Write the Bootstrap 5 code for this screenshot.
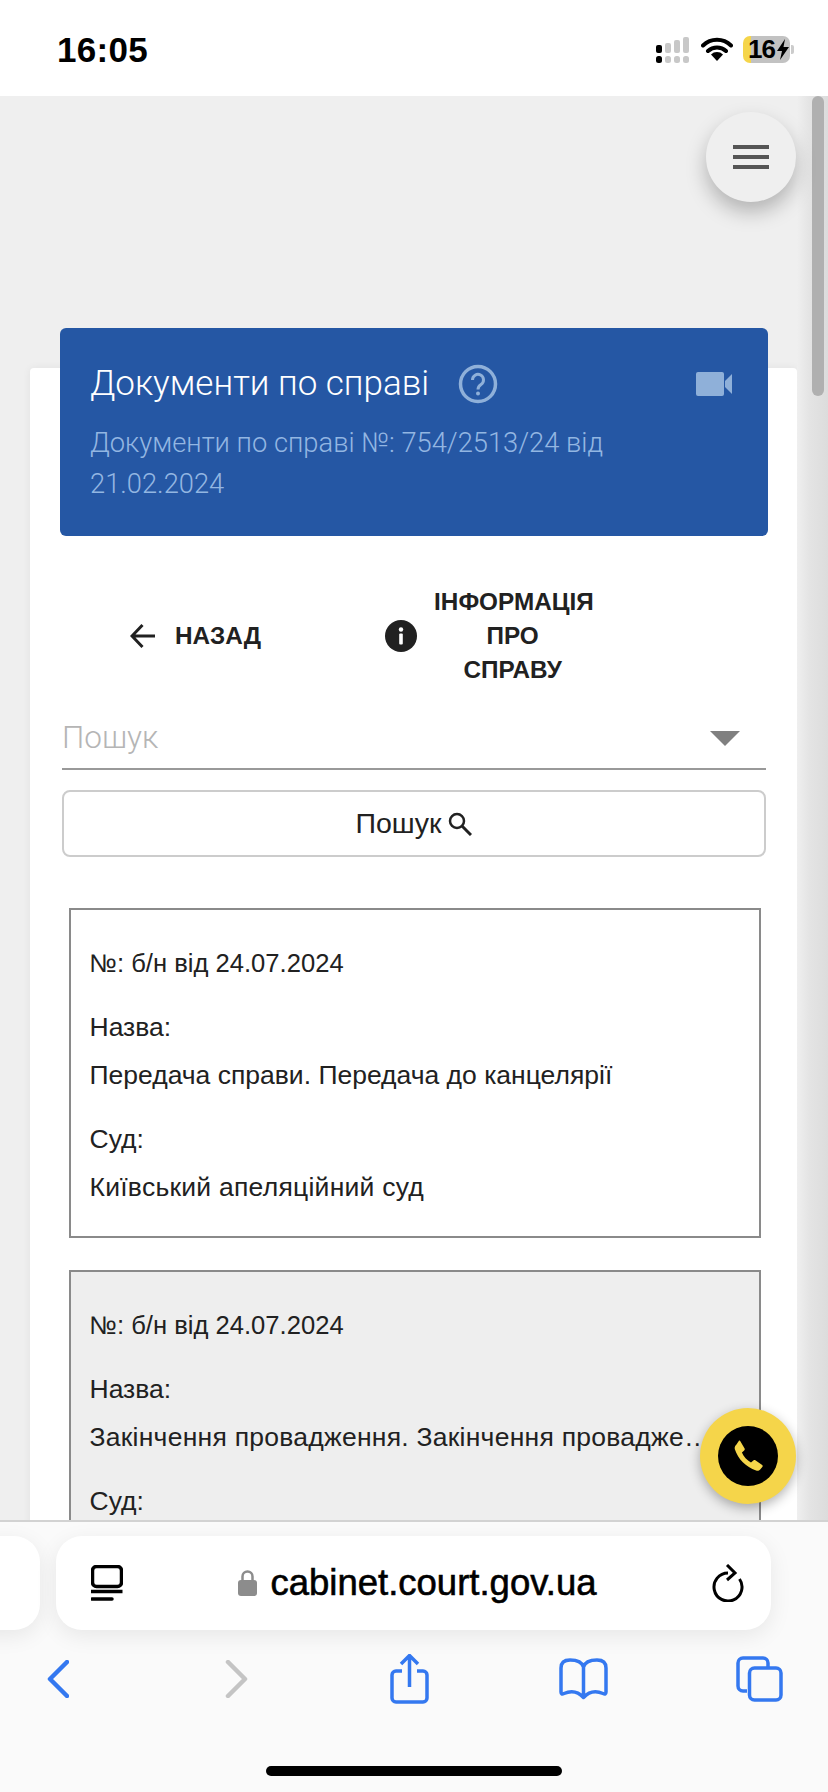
<!DOCTYPE html>
<html lang="uk">
<head>
    <meta charset="UTF-8">
    <meta name="viewport" content="width=device-width, initial-scale=1.0">
    <title>Документи по справі</title>
    <link href="https://cdn.jsdelivr.net/npm/bootstrap@5.3.0/dist/css/bootstrap.min.css" rel="stylesheet">
    <style>
        html, body { height: 1792px; overflow: hidden; }
        body { font-family: "Liberation Sans", Arial, sans-serif; background: #fafafa; color: #212121; }
        .status-bar { height: 96px; background: #fff; padding: 0 34px 0 57px; }
        .status-time { font-size: 35px; font-weight: 700; color: #000; line-height: 1; padding-top: 32px; letter-spacing: .3px; }
        .status-icons { padding-top: 36px; gap: 10px; }
        .battery-box { width: 47px; height: 27px; border-radius: 7px; background: linear-gradient(90deg, #f5d54a 8px, #c2c2c2 8px); font-size: 26px; font-weight: 700; color: #000; line-height: 27px; padding-left: 5px; letter-spacing: -1px; }
        .battery-box svg { flex: none; margin-left: 2px; }
        .battery-nub { width: 3px; height: 9px; background: #ccc; border-radius: 0 2px 2px 0; margin: 9px 0 0 1px; }
        .page-area { height: 1424px; background: #efefef; overflow: hidden; position: relative; }
        .sheet { margin: 272px 31px 0 30px; background: #fff; border-radius: 4px; padding: 0 29px 40px 30px; box-shadow: 0 0 8px rgba(0,0,0,.06); }
        .blue-head { background: #2557a4; border-radius: 6px; height: 208px; position: relative; top: -40px; margin-bottom: -40px; padding: 34px 36px 0 30px; color: #fff; }
        .head-title { font-family: Roboto, "Liberation Sans", sans-serif; font-weight: 300; font-size: 35px; line-height: 44px; }
        .head-help { margin-left: 29px; }
        .head-sub { font-family: Roboto, "Liberation Sans", sans-serif; font-weight: 300; font-size: 27.3px; line-height: 41px; color: #93b6e2; margin-top: 17px; margin-right: -6px; }
        .nav-line { padding: 49px 0 0 70px; align-items: center; font-weight: 700; font-size: 24.3px; line-height: 34px; color: #212121; }
        .back-label { margin-left: 19px; }
        .info-icon { margin-left: 124px; }
        .info-label { width: 157px; text-align: center; margin-left: 17px; white-space: nowrap; }
        .search-line { margin: 21px 2px 0; height: 62px; border-bottom: 2px solid #999; padding-right: 26px; }
        .search-hint { font-family: Roboto, "Liberation Sans", sans-serif; font-weight: 300; font-size: 31.5px; color: #b5b5b5; }
        .search-caret { width: 0; height: 0; border-left: 15px solid transparent; border-right: 15px solid transparent; border-top: 15px solid #808080; }
        .search-btn { margin: 20px 2px 0; width: calc(100% - 4px); height: 67px; border: 2px solid #ccc; border-radius: 8px; font-size: 28.5px; color: #212121; background: #fff; gap: 7px; }
        .doc-box { margin: 0 7px 32px 8.5px; border: 2px solid #8a8a8a; border-radius: 0; padding: 29px 18px 25px 19px; font-size: 26.5px; line-height: 48px; color: #212121; }
        .doc-box p { margin: 0; white-space: nowrap; }
        .doc-box p.gap-top { margin-top: 16px; }
        .doc-box p.doc-num { font-size: 25.6px; }
        .doc-box p.doc-wide { letter-spacing: .25px; }
        .doc-box.shaded { background: #eee; }
        .doc-list { padding-top: 51px; }
        .menu-fab { position: absolute; top: 16px; left: 706px; width: 90px; height: 90px; border-radius: 50%; background: #efefef; border: 0; box-shadow: 0 10px 20px rgba(0,0,0,.25); gap: 6px; }
        .menu-fab span { display: block; width: 36px; height: 4px; background: #555; }
        .call-fab { position: absolute; top: 1312px; left: 700px; width: 96px; height: 96px; border-radius: 50%; background: #f5d54a; border: 0; box-shadow: 0 4px 12px rgba(0,0,0,.3); }
        .call-inner { width: 60px; height: 60px; border-radius: 50%; background: #000; }
        .scroll-track { position: absolute; top: 0; bottom: 0; right: 0; width: 31px; background: linear-gradient(90deg, #efefef, #e4e4e4 40%, #dcdcdc); }
        .scroll-thumb { position: absolute; top: 0; right: 4px; width: 12px; height: 300px; border-radius: 6px; background: #b0b0b0; }
        .browser-bar { height: 272px; background: #fafafa; border-top: 2px solid #d2d2d2; position: relative; }
        .url-row { padding-top: 14px; gap: 16px; margin-left: -60px; }
        .url-pill { height: 94px; border-radius: 26px; background: #fff; box-shadow: 0 6px 22px rgba(0,0,0,.08); }
        .url-pill.side-tab { width: 100px; flex: none; }
        .url-pill.main-tab { width: 715px; flex: none; padding: 0 27px 0 35px; }
        .url-text { font-size: 36.5px; font-weight: 400; color: #000; -webkit-text-stroke: .6px #000; margin-left: 13px; line-height: 1; }
        .tool-row { display: grid; grid-template-columns: 178px 165px 169px 177px auto; padding: 24px 0 0 47px; align-items: center; height: 72px; }
        .home-line { position: absolute; left: 266px; top: 244px; width: 296px; height: 10px; border-radius: 5px; background: #000; }
    </style>
</head>
<body>
    <div class="status-bar d-flex justify-content-between">
        <div class="status-time">16:05</div>
        <div class="status-icons d-flex">
            <svg width="35" height="28" viewBox="0 0 35 28">
                <rect x="0" y="9" width="6" height="8" rx="2" fill="#000"/>
                <rect x="9" y="7" width="6" height="10" rx="2" fill="#c8c8c8"/>
                <rect x="18" y="4" width="6" height="13" rx="2" fill="#c8c8c8"/>
                <rect x="27" y="1" width="6" height="16" rx="2" fill="#c8c8c8"/>
                <rect x="0" y="20" width="6" height="7" rx="2.5" fill="#000"/>
                <rect x="9" y="20" width="6" height="7" rx="2.5" fill="#c8c8c8"/>
                <rect x="18" y="20" width="6" height="7" rx="2.5" fill="#c8c8c8"/>
                <rect x="27" y="20" width="6" height="7" rx="2.5" fill="#c8c8c8"/>
            </svg>
            <svg width="32" height="26" viewBox="0 0 32 26">
                <path d="M2 9.5a20 20 0 0 1 28 0M7 15a13 13 0 0 1 18 0" fill="none" stroke="#000" stroke-width="4" stroke-linecap="round"/>
                <path d="M16 25l-6-6.5a8.5 8.500 0 0 1 12 0z" fill="#000"/>
            </svg>
            <div class="d-flex">
                <div class="battery-box d-flex align-items-center">16<svg width="12" height="21" viewBox="0 0 12 21"><path d="M8 0L0 12h5l-2 9 9-13H6.500z" fill="#000"/></svg></div>
                <div class="battery-nub"></div>
            </div>
        </div>
    </div>

    <div class="page-area">
        <div class="scroll-track"><div class="scroll-thumb"></div></div>
        <div class="sheet">
            <div class="blue-head">
                <div class="d-flex align-items-center">
                    <div class="head-title">Документи по справі</div>
                    <svg class="head-help" width="40" height="40" viewBox="0 0 40 40">
                        <circle cx="20" cy="20" r="17.500" fill="none" stroke="#8fb0d9" stroke-width="3.500"/>
                        <path d="M14.500 16a5.500 5.500 0 1 1 8.500 4.500c-2 1.300-3 2.200-3 5" fill="none" stroke="#8fb0d9" stroke-width="3"/>
                        <circle cx="20" cy="29.500" r="2" fill="#8fb0d9"/>
                    </svg>
                    <svg class="ms-auto" width="36" height="24" viewBox="0 0 36 24">
                        <rect x="0" y="0" width="28" height="24" rx="2" fill="#8fb0d9"/>
                        <path d="M29 9l7-7v20l-7-7z" fill="#8fb0d9"/>
                    </svg>
                </div>
                <div class="head-sub">Документи по справі №: 754/2513/24 від 21.02.2024</div>
            </div>

            <div class="nav-line d-flex">
                <svg width="26" height="26" viewBox="0 0 26 26">
                    <path d="M25 13H3M12.500 2L2 13l10.500 11" fill="none" stroke="#212121" stroke-width="3"/>
                </svg>
                <span class="back-label">НАЗАД</span>
                <svg class="info-icon" width="32" height="32" viewBox="0 0 32 32">
                    <circle cx="16" cy="16" r="16" fill="#212121"/>
                    <rect x="14.200" y="13.500" width="3.600" height="11" rx="1" fill="#fff"/>
                    <circle cx="16" cy="9.500" r="2.200" fill="#fff"/>
                </svg>
                <div class="info-label">ІНФОРМАЦІЯ<br>ПРО<br>СПРАВУ</div>
            </div>

            <div class="search-line d-flex justify-content-between align-items-center">
                <span class="search-hint">Пошук</span>
                <span class="search-caret"></span>
            </div>
            <button class="search-btn btn d-flex align-items-center justify-content-center" type="button">
                Пошук
                <svg width="24" height="24" viewBox="0 0 24 24">
                    <circle cx="9" cy="9" r="7" fill="none" stroke="#212121" stroke-width="2.500"/>
                    <path d="M14 14l9 9" stroke="#212121" stroke-width="3"/>
                </svg>
            </button>

            <div class="doc-list">
                <div class="doc-box">
                    <p class="doc-num">№: б/н від 24.07.2024</p>
                    <p class="gap-top">Назва:</p>
                    <p>Передача справи. Передача до канцелярії</p>
                    <p class="gap-top">Суд:</p>
                    <p class="doc-wide">Київський апеляційний суд</p>
                </div>
                <div class="doc-box shaded">
                    <p class="doc-num">№: б/н від 24.07.2024</p>
                    <p class="gap-top">Назва:</p>
                    <p class="doc-wide">Закінчення провадження. Закінчення проваджe…</p>
                    <p class="gap-top">Суд:</p>
                </div>
            </div>
        </div>

        <button class="menu-fab d-flex flex-column align-items-center justify-content-center p-0" type="button" aria-label="Меню">
            <span></span><span></span><span></span>
        </button>
        <button class="call-fab d-flex align-items-center justify-content-center p-0" type="button" aria-label="Дзвінок">
            <span class="call-inner d-flex align-items-center justify-content-center">
                <svg width="34" height="34" viewBox="0 0 24 24">
                    <path d="M6.600 1.500l3 5.200c.3.500.1 1-.3 1.400L7.700 9.600c1.200 2.800 3.600 5.500 6.400 7l1.700-1.500c.5-.4 1-.4 1.400-.1l4.800 3.300c.5.400.5 1 .1 1.500l-1.500 1.700c-.7.800-1.800 1.100-2.900.7C10.500 19.800 5 14.300 2.700 7.300c-.3-1.100 0-2.300.9-3l1.900-2.900c.3-.4.800-.3 1.100.1z" fill="#f5d54a"/>
                </svg>
            </span>
        </button>
    </div>

    <div class="browser-bar">
        <div class="url-row d-flex">
            <div class="url-pill side-tab"></div>
            <div class="url-pill main-tab d-flex align-items-center justify-content-between">
                <svg width="32" height="36" viewBox="0 0 32 36">
                    <rect x="1.500" y="1.500" width="29" height="20" rx="4" fill="none" stroke="#000" stroke-width="3.500"/>
                    <path d="M0 26.500h31.500" stroke="#000" stroke-width="3.500"/>
                    <path d="M1 34h20" stroke="#000" stroke-width="3.500" stroke-linecap="round"/>
                </svg>
                <div class="d-flex align-items-center">
                    <svg width="19" height="26" viewBox="0 0 19 26">
                        <path d="M4.500 11V6.500a5 5 0 0 1 10 0V11" fill="none" stroke="#8c8c8c" stroke-width="2.500"/>
                        <rect x="0" y="10" width="19" height="16" rx="3" fill="#8c8c8c"/>
                    </svg>
                    <span class="url-text">cabinet.court.gov.ua</span>
                </div>
                <svg width="32" height="38" viewBox="0 0 32 38">
                    <path d="M16 9A14 14 0 1 0 27.500 15" fill="none" stroke="#000" stroke-width="3"/>
                    <path d="M15 1l8 8-8 7" fill="none" stroke="#000" stroke-width="3"/>
                </svg>
            </div>
        </div>
        <div class="tool-row">
            <svg width="22" height="38" viewBox="0 0 22 38"><path d="M20 2L3 19l17 17" fill="none" stroke="#3478f0" stroke-width="4.500" stroke-linecap="round" stroke-linejoin="round"/></svg>
            <svg width="23" height="38" viewBox="0 0 23 38"><path d="M3 2l17 17L3 36" fill="none" stroke="#c4c4c4" stroke-width="4.500" stroke-linecap="round" stroke-linejoin="round"/></svg>
            <svg width="39" height="50" viewBox="0 0 39 50">
                <path d="M12 17H6a4 4 0 0 0-4 4v23a4 4 0 0 0 4 4h27a4 4 0 0 0 4-4V21a4 4 0 0 0-4-4h-6" fill="none" stroke="#3478f0" stroke-width="3.500"/>
                <path d="M19.500 33V3M11 10l8.500-8.500L28 10" fill="none" stroke="#3478f0" stroke-width="3.500"/>
            </svg>
            <svg width="49" height="42" viewBox="0 0 49 42">
                <path d="M24.500 9C23 4 17 2 11 2 5 2 2 5 2 10v24c0 2 1 2.500 3 1.500 7-3 14-2 19.500 4 5.500-6 12.500-7 19.500-4 2 1 3 .5 3-1.500V10c0-5-3-8-9-8-6 0-12 2-13.500 7zM24.500 9v30" fill="none" stroke="#3478f0" stroke-width="3.500" stroke-linejoin="round"/>
            </svg>
            <svg width="47" height="46" viewBox="0 0 47 46">
                <path d="M11 35H7a5 5 0 0 1-5-5V7a5 5 0 0 1 5-5h20a5 5 0 0 1 5 5v5" fill="none" stroke="#3478f0" stroke-width="3.500"/>
                <rect x="13.500" y="12" width="31.500" height="32" rx="5" fill="none" stroke="#3478f0" stroke-width="3.500"/>
            </svg>
        </div>
        <div class="home-line"></div>
    </div>

    <script src="https://cdn.jsdelivr.net/npm/bootstrap@5.3.0/dist/js/bootstrap.bundle.min.js"></script>
</body>
</html>
